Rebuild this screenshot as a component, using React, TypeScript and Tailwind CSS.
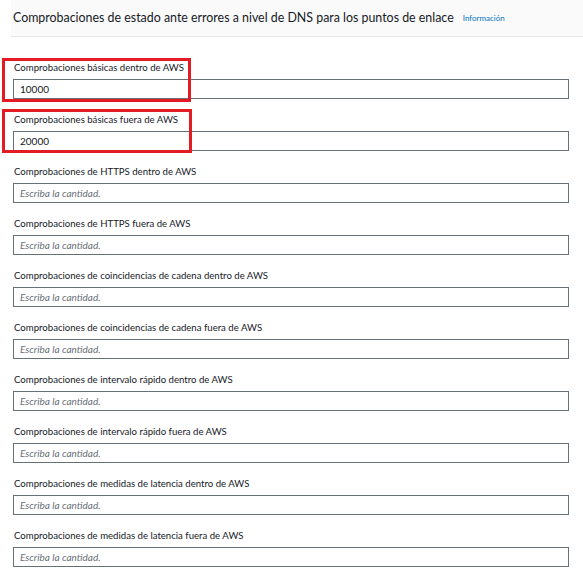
import React from 'react';

const fields = [
  { label: 'Comprobaciones básicas dentro de AWS', value: '10000' },
  { label: 'Comprobaciones básicas fuera de AWS', value: '20000' },
  { label: 'Comprobaciones de HTTPS dentro de AWS', value: '' },
  { label: 'Comprobaciones de HTTPS fuera de AWS', value: '' },
  { label: 'Comprobaciones de coincidencias de cadena dentro de AWS', value: '' },
  { label: 'Comprobaciones de coincidencias de cadena fuera de AWS', value: '' },
  { label: 'Comprobaciones de intervalo rápido dentro de AWS', value: '' },
  { label: 'Comprobaciones de intervalo rápido fuera de AWS', value: '' },
  { label: 'Comprobaciones de medidas de latencia dentro de AWS', value: '' },
  { label: 'Comprobaciones de medidas de latencia fuera de AWS', value: '' },
];

const App: React.FC = () => {
  return (
    <div className="relative w-[583px] h-[574px] overflow-hidden bg-white font-['Lato',sans-serif] text-[#16191f]">
      <div className="ml-[11px] h-[37px] bg-[#fafafa] border-b border-[#e5e7e9] flex items-center pl-[2px]">
        <h2 className="text-[12.4px] leading-none">
          Comprobaciones de estado ante errores a nivel de DNS para los puntos de enlace
        </h2>
        <a className="ml-[9px] text-[8px] text-[#0073bb] leading-none">Información</a>
      </div>

      <div className="pl-[13px] pr-[14px] pt-[24px]">
        {fields.map((f) => (
          <div key={f.label} className="mb-[14px]">
            <div className="h-[13px] leading-[14px] text-[9.6px] pl-[1px] mb-[5px]">{f.label}</div>
            <input
              type="text"
              readOnly
              value={f.value}
              placeholder="Escriba la cantidad."
              className="block w-full h-[20px] border border-[#687078] px-[6px] text-[10px] text-[#16191f] placeholder:italic placeholder:text-[#687078] outline-none"
            />
          </div>
        ))}
      </div>

      <div className="absolute left-[2px] top-[58px] w-[189px] h-[44px] border-[3px] border-[#e31b23] pointer-events-none" />
      <div className="absolute left-[2px] top-[109px] w-[190px] h-[44px] border-[3px] border-[#e31b23] pointer-events-none" />
    </div>
  );
};

export default App;
